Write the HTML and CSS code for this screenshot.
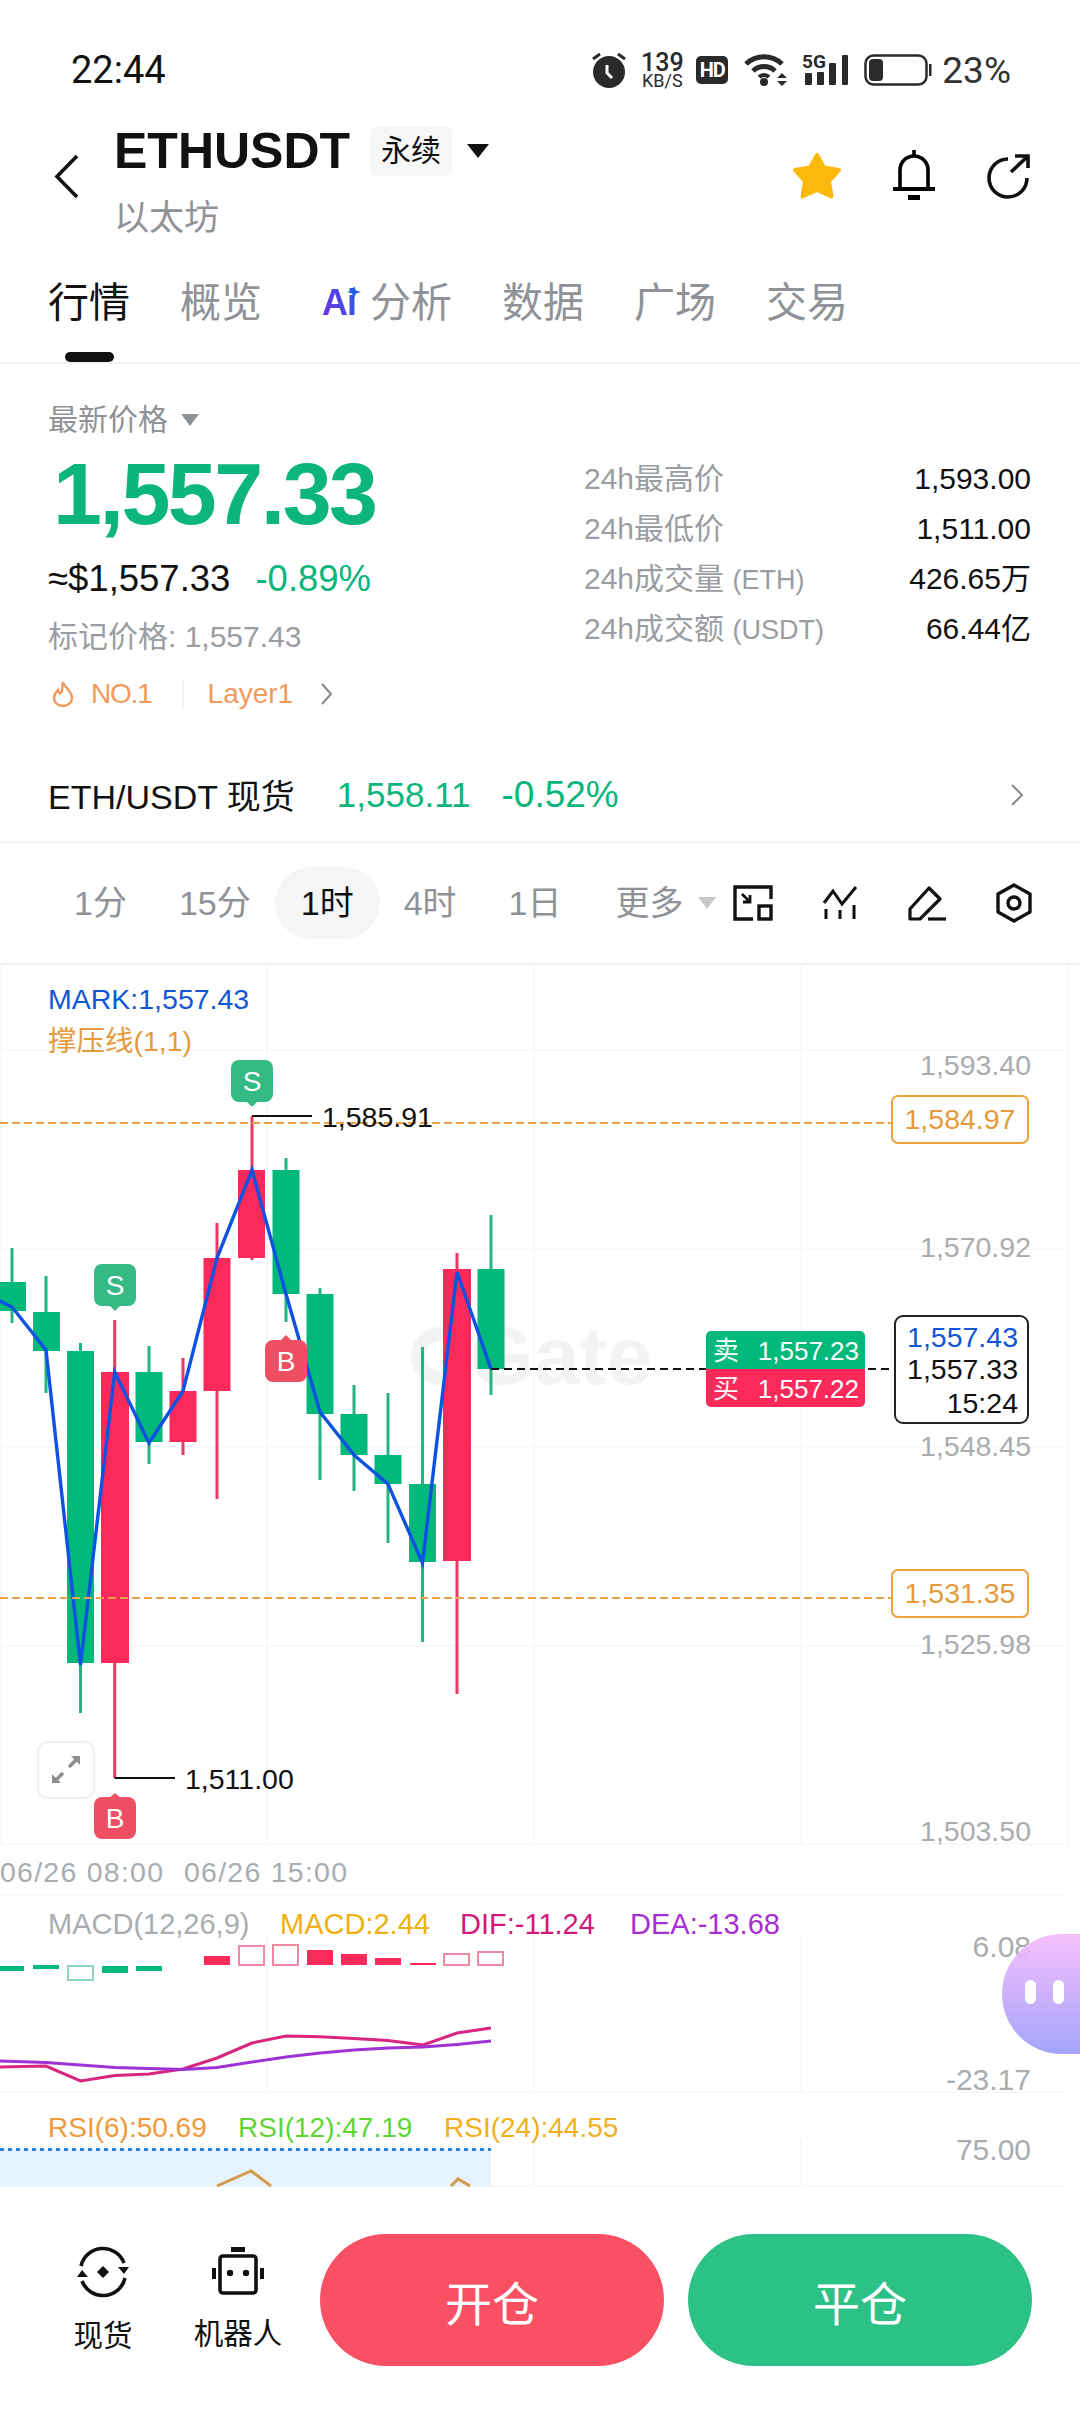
FILE: index.html
```html
<!DOCTYPE html>
<html lang="en">
<head>
  <meta charset="UTF-8" />
  <meta name="viewport" content="width=device-width, initial-scale=1" />
  <title>ETHUSDT</title>
  <link rel="stylesheet" href="styles.css">
</head>
<body>
  <div class="status">
    <span class="time">22:44</span>
    <div class="status-icons">
      <svg class="ic-alarm" width="34" height="36" viewBox="0 0 34 36">
        <circle cx="17" cy="20" r="16" fill="#2a2a2a"/>
        <path d="M1 7 L8 2 M33 7 L26 2" stroke="#2a2a2a" stroke-width="3" fill="none"/>
        <path d="M15 13 V21 L20 26" stroke="#fff" stroke-width="3" fill="none"/>
      </svg>
      <div class="speed"><span class="speed-num">139</span><span class="speed-unit">KB/S</span></div>
      <div class="hd">HD</div>
      <svg class="ic-wifi" width="44" height="34" viewBox="0 0 44 34">
        <path d="M2 11 A26 26 0 0 1 38 11 M9 18 A16 16 0 0 1 31 18" stroke="#2a2a2a" stroke-width="5" fill="none"/>
        <circle cx="20" cy="29" r="4" fill="#2a2a2a"/>
        <path d="M15 24 A7 7 0 0 1 25 24" stroke="#2a2a2a" stroke-width="4" fill="none"/>
        <path d="M38 20 L43 25 H33 Z M33 28 H43 L38 33 Z" fill="#2a2a2a"/>
      </svg>
      <svg class="ic-signal" width="48" height="34" viewBox="0 0 48 34">
        <text x="0" y="15" class="sig-text">5G</text>
        <rect x="3" y="20" width="7" height="12" rx="1" fill="#2a2a2a"/>
        <rect x="15" y="19" width="7" height="13" rx="1" fill="#2a2a2a"/>
        <rect x="27" y="10" width="7" height="22" rx="1" fill="#2a2a2a"/>
        <rect x="40" y="2" width="6" height="30" rx="1" fill="#2a2a2a"/>
      </svg>
      <svg class="ic-batt" width="68" height="32" viewBox="0 0 68 32">
        <rect x="1.5" y="1.5" width="61" height="29" rx="8" fill="none" stroke="#2a2a2a" stroke-width="2.5"/>
        <rect x="5" y="5" width="14" height="22" rx="4" fill="#2a2a2a"/>
        <rect x="65" y="10" width="2.5" height="12" fill="#2a2a2a"/>
      </svg>
      <span class="batt-num">23%</span>
    </div>
  </div>

  <div class="nav">
    <svg class="back" width="25" height="45" viewBox="0 0 25 45">
      <path d="M23 2 L3 22.5 L23 43" stroke="#111" stroke-width="3.6" fill="none"/>
    </svg>
    <div class="title">
      <div class="title-row">
        <h1>ETHUSDT</h1>
        <span class="badge">永续</span>
        <span class="tri"></span>
      </div>
      <div class="subname">以太坊</div>
    </div>
    <div class="nav-actions">
      <svg width="50" height="47" viewBox="0 0 50 47">
        <path d="M25 3 L32 15.5 L47 18 L37 29.5 L39.5 44.5 L25 38 L10.5 44.5 L13 29.5 L3 18 L18 15.5 Z" fill="#fdb90b" stroke="#fdb90b" stroke-width="4" stroke-linejoin="round"/>
      </svg>
      <svg width="42" height="50" viewBox="0 0 42 50">
        <path d="M21 0 V5 M7 38 V20 A14 14 0 0 1 35 20 V38" stroke="#000" stroke-width="3.6" fill="none"/>
        <path d="M0 39 H42" stroke="#000" stroke-width="4"/>
        <rect x="15" y="45" width="12" height="5" fill="#000"/>
      </svg>
      <svg width="44" height="45" viewBox="0 0 44 45">
        <path d="M22 6 A19 19 0 1 0 41 25" stroke="#111" stroke-width="3.6" fill="none"/>
        <path d="M25 19 L42 3 M29 3 H42 V15" stroke="#111" stroke-width="3.6" fill="none"/>
      </svg>
    </div>
  </div>

  <div class="tabs">
    <span class="tab tab-on">行情</span>
    <span class="tab">概览</span>
    <span class="tab tab-ai">
      <span class="ai-mark">Ai<svg class="ai-star" width="14" height="12" viewBox="0 0 14 12"><path d="M7 0 L9 4.5 L14 6 L9 7.5 L7 12 L5 7.5 L0 6 L5 4.5 Z" fill="#1e62e8"/></svg></span>
      分析
    </span>
    <span class="tab">数据</span>
    <span class="tab">广场</span>
    <span class="tab">交易</span>
  </div>

  <section class="price">
    <div class="price-left">
      <div class="latest">最新价格<span class="tri tri-gray"></span></div>
      <div class="big">1,557.33</div>
      <div class="sub"><span>≈$1,557.33</span><span class="green">-0.89%</span></div>
      <div class="mark">标记价格: 1,557.43</div>
      <div class="tags">
        <svg width="22" height="26" viewBox="0 0 22 26">
          <path d="M11 1 C12 6 20 10 20 17 A9 8 0 0 1 2 17 C2 13 4 11 6 9 C6 12 8 13 9 12 C11 9 10 5 11 1 Z" fill="none" stroke="#f29a5b" stroke-width="2.4"/>
        </svg>
        <span class="tag-no">NO.1</span>
        <span class="tag-line"></span>
        <span class="tag-layer">Layer1</span>
        <svg width="13" height="22" viewBox="0 0 13 22"><path d="M2 1 L11 11 L2 21" stroke="#888" stroke-width="2" fill="none"/></svg>
      </div>
    </div>
    <div class="stats">
      <div class="stat"><span>24h最高价</span><b>1,593.00</b></div>
      <div class="stat"><span>24h最低价</span><b>1,511.00</b></div>
      <div class="stat"><span>24h成交量 <small>(ETH)</small></span><b>426.65万</b></div>
      <div class="stat"><span>24h成交额 <small>(USDT)</small></span><b>66.44亿</b></div>
    </div>
  </section>

  <div class="spot">
    <span class="spot-name">ETH/USDT 现货</span>
    <span class="spot-price">1,558.11</span>
    <span class="spot-pct">-0.52%</span>
    <svg width="14" height="22" viewBox="0 0 14 22"><path d="M2 1 L12 11 L2 21" stroke="#888" stroke-width="2" fill="none"/></svg>
  </div>

  <div class="periods">
    <span class="period">1分</span>
    <span class="period">15分</span>
    <span class="period period-on">1时</span>
    <span class="period">4时</span>
    <span class="period">1日</span>
    <span class="period period-more">更多<span class="tri tri-light"></span></span>
    <div class="tools">
      <svg width="40" height="36" viewBox="0 0 40 36">
        <path d="M38 14 V2 H2 V34 H20" stroke="#111" stroke-width="3.4" fill="none"/>
        <rect x="26" y="21" width="12" height="13" stroke="#111" stroke-width="3.4" fill="none"/>
        <path d="M9 9 L17 17 M10 17 H17 V10" stroke="#111" stroke-width="2.8" fill="none"/>
      </svg>
      <svg width="35" height="34" viewBox="0 0 35 34">
        <path d="M1 17 L10 5 L19 18 L33 1" stroke="#111" stroke-width="3" fill="none"/>
        <path d="M3 23 V33 M17 24 V33 M31 19 V33" stroke="#111" stroke-width="3" fill="none"/>
      </svg>
      <svg width="38" height="37" viewBox="0 0 38 37">
        <path d="M2 34 V24 L21 3 L32 14 L12 34 Z" stroke="#111" stroke-width="3.2" fill="none" stroke-linejoin="round"/>
        <path d="M20 34 H38" stroke="#111" stroke-width="3.2"/>
      </svg>
      <svg width="36" height="40" viewBox="0 0 36 40">
        <path d="M18 2 L34 11 V29 L18 38 L2 29 V11 Z" stroke="#111" stroke-width="3.4" fill="none" stroke-linejoin="round"/>
        <circle cx="18" cy="20" r="6" stroke="#111" stroke-width="3.4" fill="none"/>
      </svg>
    </div>
  </div>

  <svg class="pane" width="1080" height="930" viewBox="0 965 1080 930">
    <!-- grid -->
    <path class="grid" d="M0 1050 H1068 M0 1249 H1068 M0 1447 H1068 M0 1646 H1068 M0 1844 H1068 M1 965 V1844 M267 965 V1844 M534 965 V1844 M801 965 V1844 M1068 965 V1844"/>

    <!-- watermark -->
    <circle cx="440" cy="1356" r="22" fill="none" stroke="#f2f4f4" stroke-width="14"/>
    <text class="watermark" x="470" y="1384">Gate</text>

    <!-- wicks -->
    <path class="wick-g" d="M12 1248 V1323 M46 1276 V1393 M80.5 1343 V1713 M149 1346 V1464 M286 1158 V1322 M320 1288 V1480 M354 1385 V1491 M388 1393 V1543 M422.5 1347 V1642 M491 1215 V1395"/>
    <path class="wick-r" d="M114.7 1320 V1778 M183 1358 V1455 M217 1223 V1499 M252 1116 V1260 M457 1253 V1694"/>

    <!-- bodies -->
    <g class="body-g">
      <rect x="-2" y="1282" width="28" height="29"/>
      <rect x="33" y="1312" width="27" height="39"/>
      <rect x="67" y="1351" width="27" height="312"/>
      <rect x="135.5" y="1372" width="27" height="70"/>
      <rect x="272.5" y="1170" width="27" height="124"/>
      <rect x="306.5" y="1294" width="27" height="120"/>
      <rect x="340.5" y="1414" width="27" height="41"/>
      <rect x="374.5" y="1455" width="27" height="29"/>
      <rect x="409" y="1484" width="27" height="78"/>
      <rect x="477.5" y="1269" width="27" height="100"/>
    </g>
    <g class="body-r">
      <rect x="101" y="1372" width="28" height="291"/>
      <rect x="169.5" y="1391" width="27" height="51"/>
      <rect x="203.5" y="1258" width="27" height="133"/>
      <rect x="238" y="1170" width="27" height="88"/>
      <rect x="443" y="1269" width="28" height="292"/>
    </g>

    <!-- close line -->
    <polyline class="close-line" points="-2,1300 12,1307 46,1350 80.5,1665 114.7,1372 149,1443 183,1391 217,1258 252,1170 286,1294 320,1412 354,1455 388,1484 422.5,1563 457,1272 491,1369"/>

    <!-- support / resistance -->
    <path class="dash-or" d="M0 1123 H891 M0 1598 H891"/>
    <path class="dash-bk" d="M491 1369 H894"/>
    <rect class="or-box" x="892" y="1096" width="136" height="47" rx="6"/>
    <rect class="or-box" x="892" y="1570" width="136" height="47" rx="6"/>
    <text class="t28 t-or" x="960" y="1129" text-anchor="middle">1,584.97</text>
    <text class="t28 t-or" x="960" y="1603" text-anchor="middle">1,531.35</text>

    <!-- legend -->
    <text class="t28 t-blue" x="48" y="1009">MARK:1,557.43</text>
    <text class="t28 t-or" x="48" y="1051">撑压线(1,1)</text>

    <!-- high / low callouts -->
    <path class="callout" d="M252 1116 H312 M114.7 1778 H175"/>
    <text class="t28" x="322" y="1127">1,585.91</text>
    <text class="t28" x="185" y="1789">1,511.00</text>

    <!-- trade marks -->
    <g class="mark-s">
      <rect x="231" y="1060" width="42" height="42" rx="8"/><path d="M246 1101 H258 L252 1107 Z"/>
      <rect x="94" y="1264" width="42" height="42" rx="8"/><path d="M109 1305 H121 L115 1311 Z"/>
    </g>
    <g class="mark-b">
      <rect x="265" y="1340" width="42" height="42" rx="8"/><path d="M280 1341 H292 L286 1335 Z"/>
      <rect x="94" y="1797" width="42" height="42" rx="8"/><path d="M109 1798 H121 L115 1793 Z"/>
    </g>
    <text class="t-mark" x="252" y="1091" text-anchor="middle">S</text>
    <text class="t-mark" x="115" y="1295" text-anchor="middle">S</text>
    <text class="t-mark" x="286" y="1371" text-anchor="middle">B</text>
    <text class="t-mark" x="115" y="1828" text-anchor="middle">B</text>

    <!-- axis -->
    <g class="t28 t-gray" text-anchor="end">
      <text x="1031" y="1075">1,593.40</text>
      <text x="1031" y="1257">1,570.92</text>
      <text x="1031" y="1456">1,548.45</text>
      <text x="1031" y="1654">1,525.98</text>
      <text x="1031" y="1841">1,503.50</text>
    </g>
    <text class="t28 t-gray t-date" x="0" y="1882">06/26 08:00</text>
    <text class="t28 t-gray t-date" x="184" y="1882">06/26 15:00</text>

    <!-- bid / ask tags -->
    <rect class="tag-sell" x="706" y="1331" width="159" height="40" rx="5"/>
    <rect class="tag-buy" x="706" y="1369" width="159" height="38" rx="5"/>
    <rect class="tag-sell" x="706" y="1345" width="159" height="24"/>
    <rect class="tag-buy" x="706" y="1369" width="159" height="20"/>
    <g class="t-tag">
      <text x="713" y="1360">卖</text>
      <text x="713" y="1398">买</text>
      <text x="859" y="1360" text-anchor="end">1,557.23</text>
      <text x="859" y="1398" text-anchor="end">1,557.22</text>
    </g>

    <!-- last price box -->
    <rect class="last-box" x="895" y="1316" width="133" height="107" rx="8"/>
    <g class="t28" text-anchor="end">
      <text class="t-blue" x="1018" y="1347">1,557.43</text>
      <text x="1018" y="1379">1,557.33</text>
      <text x="1018" y="1413">15:24</text>
    </g>

    <!-- expand button -->
    <rect class="expand" x="38" y="1742" width="56" height="56" rx="10"/>
    <path class="expand-ar" d="M76 1760 L69 1767 M63 1773 L56 1780"/>
    <path class="expand-hd" d="M71 1756 H80 V1765 Z M52 1774 V1783 H61 Z"/>
  </svg>

  <svg class="pane" width="1080" height="198" viewBox="0 1895 1080 198">
    <path class="grid" d="M0 1895.5 H1068 M0 2092 H1068 M267 1935 V2092 M534 1935 V2092 M801 1935 V2092"/>
    <text class="t29 t-gray" x="48" y="1934">MACD(12,26,9)</text>
    <text class="t29 t-macd" x="280" y="1934">MACD:2.44</text>
    <text class="t29 t-dif" x="460" y="1934">DIF:-11.24</text>
    <text class="t29 t-dea" x="630" y="1934">DEA:-13.68</text>
    <text class="t30 t-gray" x="1031" y="1957" text-anchor="end">6.08</text>
    <text class="t30 t-gray" x="1031" y="2090" text-anchor="end">-23.17</text>

    <g class="body-g">
      <rect x="-2" y="1966" width="26" height="5"/>
      <rect x="33" y="1965" width="26" height="4"/>
      <rect x="102" y="1966" width="26" height="7"/>
      <rect x="136" y="1966" width="26" height="5"/>
    </g>
    <rect class="hollow-g" x="68" y="1966" width="25" height="14"/>
    <g class="body-r">
      <rect x="204" y="1956" width="26" height="9"/>
      <rect x="307" y="1950" width="26" height="15"/>
      <rect x="341" y="1954" width="26" height="11"/>
      <rect x="375" y="1958" width="26" height="7"/>
      <rect x="410" y="1963" width="26" height="2"/>
    </g>
    <g class="hollow-r">
      <rect x="239" y="1946" width="25" height="19"/>
      <rect x="273" y="1945" width="25" height="20"/>
      <rect x="444" y="1954" width="25" height="11"/>
      <rect x="478" y="1952" width="25" height="13"/>
    </g>

    <polyline class="line-dif" points="0,2067 46,2066 80.5,2081 115,2075.5 149,2074 183,2069 217,2058 252,2043 286,2036 320,2036.7 354,2038.4 388,2040.6 423,2045 457,2033 491,2028"/>
    <polyline class="line-dea" points="0,2061 46,2062.5 80.5,2065 115,2067.4 149,2068.5 183,2069.5 217,2067.4 252,2062 286,2057 320,2053 354,2050 388,2048 423,2047 457,2044.5 491,2041"/>
  </svg>

  <svg class="pane" width="1080" height="94" viewBox="0 2093 1080 94">
    <path class="grid" d="M0 2186 H1068 M267 2140 V2187 M534 2140 V2187 M801 2140 V2187"/>
    <rect class="rsi-band" x="0" y="2149" width="491" height="38"/>
    <path class="rsi-dots" d="M0 2149.5 H491"/>
    <path class="rsi-line" d="M217 2186 L251 2171 L271 2186 M451 2186 L458 2179 L470 2186"/>
    <text class="t-rsi t-rsi6" x="48" y="2137">RSI(6):50.69</text>
    <text class="t-rsi t-rsi12" x="238" y="2137">RSI(12):47.19</text>
    <text class="t-rsi t-rsi24" x="444" y="2137">RSI(24):44.55</text>
    <text class="t30 t-gray" x="1031" y="2160" text-anchor="end">75.00</text>
  </svg>

  <footer class="foot">
    <div class="foot-item">
      <svg width="52" height="50" viewBox="0 0 52 50">
        <path d="M4 19 A22.5 22.5 0 0 1 47 16" stroke="#111" stroke-width="3.6" fill="none"/>
        <path d="M48 31 A22.5 22.5 0 0 1 5 34" stroke="#111" stroke-width="3.6" fill="none"/>
        <path d="M41 20 H52 L47 27 Z M0 30 H11 L5 23 Z" fill="#111"/>
        <path d="M26 19 L32 25 L26 31 L20 25 Z" fill="#111"/>
      </svg>
      <span>现货</span>
    </div>
    <div class="foot-item foot-bot">
      <svg width="52" height="48" viewBox="0 0 52 48">
        <rect x="19" y="0" width="14" height="5" fill="#111"/>
        <rect x="8" y="9" width="36" height="37" rx="3" fill="none" stroke="#111" stroke-width="3.6"/>
        <path d="M2 21 V32 M50 21 V32" stroke="#111" stroke-width="4"/>
        <circle cx="18" cy="26" r="3.2" fill="#111"/>
        <circle cx="34" cy="26" r="3.2" fill="#111"/>
      </svg>
      <span>机器人</span>
    </div>
    <button class="btn btn-open">开仓</button>
    <button class="btn btn-close">平仓</button>
  </footer>

  <div class="bubble"><i></i><i></i></div>
</body>
</html>
```

FILE: styles.css
```css
* { box-sizing: border-box; }
html, body {
  margin: 0;
  padding: 0;
}
body {
  position: relative;
  width: 1080px;
  height: 2414px;
  overflow: hidden;
  background: #fff;
  color: #111;
  font-family: "Liberation Sans", "Noto Sans CJK SC", sans-serif;
}
svg { display: block; flex: none; overflow: visible; }

/* status bar */
.status {
  height: 110px;
  padding: 40px 69px 10px 71px;
  display: flex;
  justify-content: space-between;
  align-items: center;
}
.time {
  font-family: Roboto, sans-serif;
  font-size: 38px;
  color: #111;
}
.status-icons {
  display: flex;
  align-items: center;
  color: #2a2a2a;
  font-family: Roboto, sans-serif;
}
.speed {
  display: flex;
  flex-direction: column;
  align-items: center;
  margin-left: 15px;
  width: 42px;
}
.speed-num { font-size: 25px; line-height: 21px; font-weight: 500; }
.speed-unit { font-size: 18px; line-height: 16px; }
.hd {
  width: 32px;
  height: 28px;
  margin-left: 13px;
  background: #2a2a2a;
  color: #fff;
  border-radius: 5px;
  font-size: 20px;
  font-weight: 700;
  line-height: 28px;
  text-align: center;
  letter-spacing: -1px;
}
.ic-wifi { margin-left: 16px; }
.ic-signal { margin-left: 14px; }
.ic-batt { margin-left: 14px; }
.sig-text { font-family: Roboto, sans-serif; font-size: 19px; font-weight: 700; fill: #2a2a2a; }
.batt-num { margin-left: 10px; font-size: 37px; color: #333; }

/* title row */
.nav {
  height: 135px;
  padding: 0 50px 0 54px;
  display: flex;
  align-items: flex-start;
}
.back { margin: 44px 35px 0 0; }
.title { flex: 1; padding-top: 15px; }
.title-row { display: flex; align-items: center; height: 52px; }
h1 {
  margin: 0;
  font-size: 50px;
  font-weight: 700;
  line-height: 52px;
}
.badge {
  margin-left: 20px;
  width: 82px;
  height: 49px;
  background: #f7f7f7;
  border-radius: 6px;
  text-align: center;
  font-size: 30px;
  line-height: 47px;
}
.tri {
  display: inline-block;
  width: 0;
  height: 0;
  margin-left: 15px;
  border-left: 11px solid transparent;
  border-right: 11px solid transparent;
  border-top: 14px solid #111;
}
.subname {
  margin-top: 19px;
  font-size: 35px;
  line-height: 44px;
  color: #8f9296;
}
.nav-actions {
  display: flex;
  align-items: center;
  gap: 51px;
  margin-top: 40px;
}

/* tabs */
.tabs {
  height: 119px;
  padding: 29px 0 0 48px;
  display: flex;
  gap: 50px;
  border-bottom: 2px solid #f2f2f2;
}
.tab {
  position: relative;
  display: flex;
  gap: 9px;
  height: 58px;
  font-size: 41px;
  line-height: 58px;
  color: #8f9296;
}
.tab-on { color: #111; }
.tab-on::after {
  content: "";
  position: absolute;
  left: 17px;
  top: 78px;
  width: 49px;
  height: 10px;
  background: #111;
  border-radius: 5px;
}
.tab-ai { margin-left: 9px; }
.ai-mark {
  position: relative;
  width: 40px;
  padding-left: 1px;
  font-size: 36px;
  font-weight: 700;
  letter-spacing: -1px;
  background: linear-gradient(70deg, #7a2ce6, #1e62e8);
  -webkit-background-clip: text;
  background-clip: text;
  color: transparent;
}
.ai-star { position: absolute; left: 26px; top: 12px; }

/* price block */
.price {
  height: 384px;
  padding: 0 49px 0 48px;
  display: flex;
  justify-content: space-between;
}
.price-left { width: 536px; padding-top: 37px; }
.latest {
  display: flex;
  align-items: center;
  font-size: 30px;
  line-height: 38px;
  color: #8f9296;
}
.tri-gray {
  margin-left: 13px;
  border-left-width: 9px;
  border-right-width: 9px;
  border-top: 12px solid #8f9296;
}
.big {
  margin: 11px 0 0 5px;
  font-size: 88px;
  font-weight: 700;
  line-height: 88px;
  letter-spacing: -2.5px;
  color: #0bb57c;
}
.sub {
  display: flex;
  gap: 25px;
  margin-top: 18px;
  font-size: 36.5px;
  line-height: 46px;
}
.green { color: #0bb57c; }
.mark {
  margin-top: 16px;
  font-size: 30px;
  line-height: 38px;
  color: #9a9da1;
}
.tags {
  display: flex;
  align-items: center;
  margin-top: 22px;
  height: 32px;
  font-size: 28px;
  color: #f29a5b;
}
.tags svg:first-child { margin-left: 4px; }
.tag-no { margin-left: 17px; letter-spacing: -1.2px; }
.tag-line { width: 2px; height: 30px; margin: 0 24px 0 30px; background: #f2f2f2; }
.tag-layer { margin-right: 27px; }

.stats { width: 447px; padding-top: 90px; }
.stat {
  display: flex;
  justify-content: space-between;
  height: 50px;
  line-height: 50px;
  font-size: 30px;
  color: #9a9da1;
}
.stat small { font-size: 27px; }
.stat b { font-weight: 400; font-size: 30px; color: #111; }

/* spot row */
.spot {
  height: 95px;
  padding: 0 56px 0 48px;
  display: flex;
  align-items: center;
  border-bottom: 2px solid #f2f2f2;
}
.spot-name { font-size: 34px; }
.spot-price { margin-left: 42px; font-size: 35px; color: #0bb57c; }
.spot-pct { margin-left: 31px; font-size: 37px; color: #0bb57c; flex: 1; }

/* intervals */
.periods {
  height: 122px;
  padding-left: 48px;
  display: flex;
  align-items: center;
  border-bottom: 2px solid #f2f2f2;
  font-size: 34px;
  color: #8f9296;
}
.period {
  display: flex;
  align-items: center;
  justify-content: center;
  height: 72px;
  padding: 0 26px;
  line-height: 72px;
}
.period-on {
  margin: 0 -2px;
  background: #f5f5f5;
  border-radius: 36px;
  color: #111;
}
.period-more { padding: 0 0 0 28px; }
.tri-light {
  margin-left: 14px;
  border-left-width: 9px;
  border-right-width: 9px;
  border-top: 12px solid #c9c9c9;
}
.tools {
  display: flex;
  align-items: center;
  margin-left: 17px;
  gap: 50px;
}

/* chart panes */
.grid { stroke: #f7f7f8; stroke-width: 1.6; fill: none; }
.watermark { font-size: 82px; font-weight: 700; fill: #f2f4f4; }
.wick-g { stroke: #25b37e; stroke-width: 3; fill: none; }
.wick-r { stroke: #e83a62; stroke-width: 3; fill: none; }
.body-g { fill: #02b87a; }
.body-r { fill: #fb2a5a; }
.hollow-g { fill: #fff; stroke: #8fd6bd; stroke-width: 2; }
.hollow-r { fill: #fff; stroke: #f08aa3; stroke-width: 2; }
.close-line { fill: none; stroke: #0d52e0; stroke-width: 3.4; }
.dash-or { stroke: #eba349; stroke-width: 2; stroke-dasharray: 8 4; fill: none; }
.dash-bk { stroke: #111; stroke-width: 2; stroke-dasharray: 8 5; fill: none; }
.or-box { fill: #fff; stroke: #e8a33d; stroke-width: 2; }
.callout { stroke: #111; stroke-width: 2; fill: none; }
.mark-s { fill: #36ba85; }
.mark-b { fill: #ee4f63; }
.t28 { font-size: 28.5px; fill: #111; }
.t29 { font-size: 29px; }
.t30 { font-size: 30px; }
.t-rsi { font-size: 28px; }
.t-or { fill: #e59b3c; }
.t-blue { fill: #1257d6; }
.t-gray { fill: #a9adb0; }
.t-date { letter-spacing: 1.25px; }
.t-mark { font-size: 28px; fill: #fff; }
.tag-sell { fill: #02b87a; }
.tag-buy { fill: #fb2a5a; }
.t-tag { font-size: 26px; fill: #fff; }
.last-box { fill: #fff; stroke: #222; stroke-width: 2; }
.expand { fill: #fff; stroke: #f0f0f0; stroke-width: 2; }
.expand-ar { stroke: #8e8e8e; stroke-width: 3.5; fill: none; }
.expand-hd { fill: #8e8e8e; }
.t-macd { fill: #f0b00f; }
.t-dif { fill: #d2187a; }
.t-dea { fill: #a92fd0; }
.line-dif { fill: none; stroke: #d8267e; stroke-width: 3; }
.line-dea { fill: none; stroke: #9e32d6; stroke-width: 3; }
.rsi-band { fill: #e6f3ff; }
.rsi-dots { stroke: #2b82dc; stroke-width: 3; stroke-dasharray: 4 4; fill: none; }
.rsi-line { stroke: #d49a4c; stroke-width: 3; fill: none; }
.t-rsi6 { fill: #ef9a3c; }
.t-rsi12 { fill: #5fd535; }
.t-rsi24 { fill: #f0b020; }

/* bottom bar */
.foot {
  height: 227px;
  padding: 47px 48px 0 0;
  display: flex;
  align-items: flex-start;
}
.foot-item {
  display: flex;
  flex-direction: column;
  align-items: center;
  gap: 20px;
  width: 92px;
  margin: 13px 0 0 57px;
  font-size: 29.5px;
  line-height: 38px;
  white-space: nowrap;
}
.foot-bot { margin-left: 43px; }
.btn {
  width: 344px;
  height: 132px;
  border: none;
  border-radius: 66px;
  color: #fff;
  font-family: inherit;
  font-size: 47px;
}
.btn-open { margin-left: 36px; background: #f95063; }
.btn-close { margin-left: 24px; background: #2cc185; }

/* floating assistant */
.bubble {
  position: absolute;
  left: 1002px;
  top: 1934px;
  width: 78px;
  height: 120px;
  padding: 46px 0 0 23px;
  display: flex;
  gap: 17px;
  border-radius: 60px 0 0 60px / 60px 0 0 60px;
  background: linear-gradient(180deg, rgba(246, 184, 251, .9), #a3a4fb);
}
.bubble i {
  width: 11px;
  height: 24px;
  background: #fff;
  border-radius: 6px;
}
```
